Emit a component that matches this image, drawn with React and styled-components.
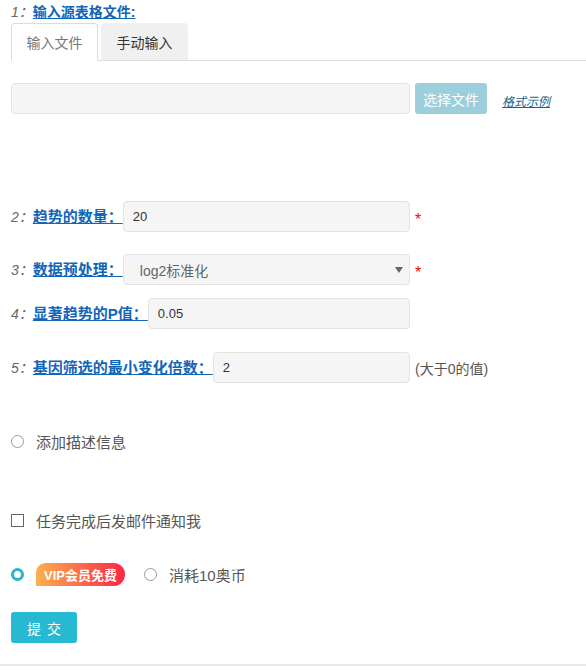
import React, { useState } from "react";
import styled, { createGlobalStyle } from "styled-components";

const GlobalStyle = createGlobalStyle`
  body {
    margin: 0;
    background: #fff;
    font-family: "Liberation Sans", "Noto Sans CJK SC", sans-serif;
    font-size: 14px;
    color: #555;
  }
`;

const Page = styled.div`
  padding: 2px 0 0 11px;
  border-bottom: 2px solid #e8e8e8;
  height: 666px;
  box-sizing: border-box;
`;

const Label = styled.span`
  display: inline-flex;
  align-items: center;
  white-space: nowrap;
  line-height: 20px;
`;

const Num = styled.i`
  color: #666;
  font-size: 14px;
`;

const LabelLink = styled.a`
  color: #1166b8;
  font-weight: bold;
  font-size: ${(p) => (p.big ? 15 : 14)}px;
  text-decoration: underline;
  cursor: pointer;
`;

const Tabs = styled.div`
  display: flex;
  gap: 3px;
  margin-top: 1px;
  border-bottom: 1px solid #ddd;
`;

const Tab = styled.div`
  width: 87px;
  height: 38px;
  box-sizing: border-box;
  display: flex;
  align-items: center;
  justify-content: center;
  font-size: 14px;
  border-radius: 4px 4px 0 0;
  margin-bottom: -1px;
  color: ${(p) => (p.active ? "#777" : "#333")};
  background: ${(p) => (p.active ? "#fff" : "#f0f0f0")};
  border: 1px solid ${(p) => (p.active ? "#ddd" : "#f0f0f0")};
  border-bottom-color: ${(p) => (p.active ? "#fff" : "#ddd")};
  cursor: pointer;
`;

const Row = styled.div`
  display: flex;
  align-items: center;
  margin-top: ${(p) => p.mt}px;
`;

const Field = styled.div`
  display: flex;
  align-items: center;
  width: 399px;
`;

const Input = styled.input`
  flex: 1;
  min-width: 0;
  height: 31px;
  box-sizing: border-box;
  border: 1px solid #e3e3e3;
  border-radius: 4px;
  background: #f5f5f5;
  padding: 0 9px;
  font-family: inherit;
  font-size: 13px;
  color: #333;
  outline: none;
`;

const SelectBox = styled.div`
  flex: 1;
  position: relative;
  height: 31px;
  box-sizing: border-box;
  border: 1px solid #e3e3e3;
  border-radius: 4px;
  background: #f5f5f5;
  display: flex;
  align-items: center;
  padding-left: 16px;
  font-size: 14px;
  color: #666;
`;

const Caret = styled.span`
  position: absolute;
  right: 6px;
  top: 12px;
  width: 0;
  height: 0;
  border-left: 4px solid transparent;
  border-right: 4px solid transparent;
  border-top: 6px solid #666;
`;

const Star = styled.span`
  color: #f00;
  font-size: 16px;
  margin-left: 5px;
  margin-top: 6px;
`;

const Hint = styled.span`
  margin-left: 5px;
  color: #555;
  font-size: 14px;
`;

const FileButton = styled.button`
  width: 72px;
  height: 31px;
  margin-left: 5px;
  border: none;
  border-radius: 3px;
  background: #9ccfdb;
  color: #fff;
  font-family: inherit;
  font-size: 14px;
  padding: 0;
`;

const ExampleLink = styled.a`
  margin-left: 15px;
  color: #1d5f8a;
  font-style: italic;
  font-size: 12px;
  text-decoration: underline;
  margin-top: 3px;
`;

const Choice = styled.label`
  display: flex;
  align-items: center;
  font-size: 15px;
  color: #555;
  gap: 12px;
  cursor: pointer;
`;

const Radio = styled.span`
  width: 13px;
  height: 13px;
  box-sizing: border-box;
  border-radius: 50%;
  border: ${(p) => (p.checked ? "3px solid #27b4cf" : "1px solid #999")};
  background: #fff;
  flex-shrink: 0;
`;

const Check = styled.span`
  width: 13px;
  height: 13px;
  box-sizing: border-box;
  border: 1px solid #666;
  background: #fff;
  flex-shrink: 0;
`;

const PayRow = styled.div`
  display: flex;
  align-items: center;
  margin-top: ${(p) => p.mt}px;
  gap: 19px;
`;

const VipBadge = styled.span`
  display: inline-flex;
  align-items: center;
  justify-content: center;
  width: 89px;
  height: 23px;
  border-radius: 10px 12px 12px 0;
  background: linear-gradient(90deg, #f9b24c, #ff2444);
  color: #fff;
  font-size: 13px;
  font-weight: bold;
`;

const Submit = styled.button`
  display: block;
  margin-top: 26px;
  width: 66px;
  height: 31px;
  border: none;
  border-radius: 3px;
  background: #27b9d1;
  color: #fff;
  font-family: inherit;
  font-size: 14px;
  letter-spacing: 6px;
  padding: 0 0 0 6px;
`;

function NumLabel({ n, text }) {
  return (
    <Label>
      <Num>{n}：</Num>
      <LabelLink big>{text}</LabelLink>
    </Label>
  );
}

export default function App() {
  const [tab, setTab] = useState(0);
  const [vip, setVip] = useState(true);
  const [notify, setNotify] = useState(false);
  return (
    <Page>
      <GlobalStyle />
      <Label>
        <Num>1：</Num>
        <LabelLink>输入源表格文件:</LabelLink>
      </Label>
      <Tabs>
        <Tab active={tab === 0} onClick={() => setTab(0)}>输入文件</Tab>
        <Tab active={tab === 1} onClick={() => setTab(1)}>手动输入</Tab>
      </Tabs>

      <Row mt={22}>
        <Field>
          <Input readOnly />
        </Field>
        <FileButton>选择文件</FileButton>
        <ExampleLink>格式示例</ExampleLink>
      </Row>

      <Row mt={87}>
        <Field>
          <NumLabel n="2" text="趋势的数量：" />
          <Input defaultValue="20" />
        </Field>
        <Star>*</Star>
      </Row>

      <Row mt={22}>
        <Field>
          <NumLabel n="3" text="数据预处理：" />
          <SelectBox>
            log2标准化
            <Caret />
          </SelectBox>
        </Field>
        <Star>*</Star>
      </Row>

      <Row mt={13}>
        <Field>
          <NumLabel n="4" text="显著趋势的P值：" />
          <Input defaultValue="0.05" />
        </Field>
      </Row>

      <Row mt={23}>
        <Field>
          <NumLabel n="5" text="基因筛选的最小变化倍数：" />
          <Input defaultValue="2" />
        </Field>
        <Hint>(大于0的值)</Hint>
      </Row>

      <Row mt={48}>
        <Choice>
          <Radio />
          添加描述信息
        </Choice>
      </Row>

      <Row mt={58}>
        <Choice onClick={() => setNotify(!notify)}>
          <Check />
          任务完成后发邮件通知我
        </Choice>
      </Row>

      <PayRow mt={32}>
        <Choice onClick={() => setVip(true)}>
          <Radio checked={vip} />
          <VipBadge>VIP会员免费</VipBadge>
        </Choice>
        <Choice onClick={() => setVip(false)}>
          <Radio checked={!vip} />
          消耗10奥币
        </Choice>
      </PayRow>

      <Submit>提交</Submit>
    </Page>
  );
}
